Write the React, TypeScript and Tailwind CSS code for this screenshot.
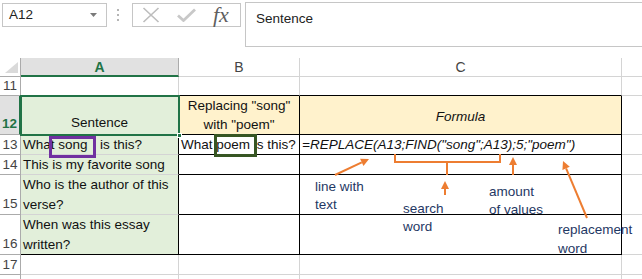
import React from 'react';

const ORANGE = '#ed7d31';

const FormulaBar: React.FC = () => (
  <div className="flex h-[47px] items-start">
    <div className="ml-[2px] mt-[3px] flex h-[24px] w-[105px] items-center justify-between border border-[#c6c6c6] pl-[6px] pr-[9px]">
      <span className="text-[13.5px] text-[#222]">A12</span>
      <svg width="7" height="4" viewBox="0 0 7 4">
        <path d="M0 0 H7 L3.5 4 Z" fill="#7a7a7a" />
      </svg>
    </div>
    <div className="ml-[10px] mt-[9px] flex flex-col gap-[3px]">
      <span className="h-[2px] w-[2px] bg-[#b5b5b5]" />
      <span className="h-[2px] w-[2px] bg-[#b5b5b5]" />
      <span className="h-[2px] w-[2px] bg-[#b5b5b5]" />
    </div>
    <div className="ml-[13px] mt-[3px] flex h-[24px] w-[109px] items-center border border-[#c6c6c6] pl-[9px]">
      <svg width="18" height="16" viewBox="0 0 18 16">
        <path d="M1.5 1 L16.5 15 M16.5 1 L1.5 15" stroke="#bdbdbd" strokeWidth="1.6" fill="none" />
      </svg>
      <svg className="ml-[17px]" width="19" height="14" viewBox="0 0 19 14">
        <path d="M1 7.5 L6.5 12.5 L18 1.5" stroke="#c8c8c8" strokeWidth="2.8" fill="none" />
      </svg>
      <span className="ml-[17px] font-['Liberation_Serif',serif] text-[22px] italic leading-none text-[#5f5f5f]">fx</span>
    </div>
    <div className="ml-[4px] mt-[2px] h-[45px] flex-1 border border-r-0 border-[#c6c6c6] pl-[10px] pt-[3px]">
      <span className="text-[13.5px] text-[#222]">Sentence</span>
    </div>
  </div>
);

const Sheet: React.FC = () => (
  <div className="mt-[11px] grid grid-cols-[21px_158px_121px_322px_20px] grid-rows-[19px_19px_39px_20px_20px_40px_40px_20px_20px] text-[13.5px] leading-[20px] text-[#111]">
    {/* header row */}
    <div className="relative border-r border-b border-[#ababab] bg-white">
      <svg className="absolute left-[5px] top-[4px]" width="13" height="11" viewBox="0 0 13 11">
        <path d="M13 0 V11 H0 Z" fill="#dadada" />
      </svg>
    </div>
    <div className="flex items-center justify-center border-r border-[#ababab] border-b-2 border-b-[#217346] bg-[#e1e1e1] text-[14px] font-bold text-[#217346]">A</div>
    <div className="flex items-center justify-center border-r border-b border-[#d4d4d4] bg-white text-[14px] text-[#444]">B</div>
    <div className="flex items-center justify-center border-r border-b border-[#d4d4d4] bg-white text-[14px] text-[#444]">C</div>
    <div className="border-b border-[#d4d4d4] bg-white" />

    {/* row 11 */}
    <div className="flex items-center justify-center border-r border-b border-[#ababab] text-[#444]">11</div>
    <div className="border-r border-b border-[#d4d4d4]" />
    <div className="border-r border-b border-[#d4d4d4] border-b-black" />
    <div className="border-r border-b border-[#d4d4d4] border-b-black" />
    <div className="border-b border-[#d4d4d4]" />

    {/* row 12 */}
    <div className="flex items-end justify-center border-r-2 border-b border-r-[#217346] border-b-[#ababab] bg-[#e1e1e1] font-bold text-[#217346]">12</div>
    <div className="flex items-end justify-center border-r border-b border-black bg-[#e2efda] pb-[1px]">Sentence</div>
    <div className="flex items-end justify-center border-r border-b border-black bg-[#fff2cc] text-center leading-[19px]">
      Replacing "song"
      <br />
      with "poem"
    </div>
    <div className="flex items-center justify-center border-r border-b border-black bg-[#fff2cc] pt-[3px] italic">Formula</div>
    <div className="border-b border-[#d4d4d4]" />

    {/* row 13 */}
    <div className="flex items-center justify-center border-r border-b border-[#ababab] text-[#444]">13</div>
    <div className="flex border-r border-b border-black border-b-[#d4d4d4] bg-[#e2efda] pl-[2px] whitespace-nowrap">
      <span className="w-[77px]">What song</span>
      <span>is this?</span>
    </div>
    <div className="border-r border-b border-black pl-[2px] whitespace-nowrap">What poem is this?</div>
    <div className="border-r border-b border-black pl-[2px] italic whitespace-nowrap">=REPLACE(A13;FIND("song";A13);5;"poem")</div>
    <div className="border-b border-[#d4d4d4]" />

    {/* row 14 */}
    <div className="flex items-center justify-center border-r border-b border-[#ababab] text-[#444]">14</div>
    <div className="border-r border-b border-black border-b-[#d4d4d4] bg-[#e2efda] pl-[2px]">This is my favorite song</div>
    <div className="border-r border-b border-black" />
    <div className="border-r border-b border-black" />
    <div className="border-b border-[#d4d4d4]" />

    {/* row 15 */}
    <div className="flex items-end justify-center border-r border-b border-[#ababab] text-[#444]">15</div>
    <div className="border-r border-b border-black border-b-[#d4d4d4] bg-[#e2efda] pl-[2px]">
      Who is the author of this
      <br />
      verse?
    </div>
    <div className="border-r border-b border-black" />
    <div className="border-r border-b border-black" />
    <div className="border-b border-[#d4d4d4]" />

    {/* row 16 */}
    <div className="flex items-end justify-center border-r border-b border-[#ababab] text-[#444]">16</div>
    <div className="border-r border-b border-black bg-[#e2efda] pl-[2px]">
      When was this essay
      <br />
      written?
    </div>
    <div className="border-r border-b border-black" />
    <div className="border-r border-b border-black" />
    <div className="border-b border-[#d4d4d4]" />

    {/* row 17 */}
    <div className="flex items-center justify-center border-r border-b border-[#ababab] text-[#444]">17</div>
    <div className="border-r border-b border-[#d4d4d4]" />
    <div className="border-r border-b border-[#d4d4d4]" />
    <div className="border-r border-b border-[#d4d4d4]" />
    <div className="border-b border-[#d4d4d4]" />

    {/* row 18 */}
    <div className="border-r border-[#ababab]" />
    <div className="border-r border-[#d4d4d4]" />
    <div className="border-r border-[#d4d4d4]" />
    <div className="border-r border-[#d4d4d4]" />
    <div />
  </div>
);

const Arrow: React.FC<{ x1: number; y1: number; x2: number; y2: number }> = ({ x1, y1, x2, y2 }) => {
  const a = Math.atan2(y2 - y1, x2 - x1);
  const len = 8;
  const w = 4;
  const bx = x2 - Math.cos(a) * len;
  const by = y2 - Math.sin(a) * len;
  const px = -Math.sin(a) * w;
  const py = Math.cos(a) * w;
  return (
    <g>
      <line x1={x1} y1={y1} x2={bx} y2={by} stroke={ORANGE} strokeWidth="2" />
      <path d={`M${x2} ${y2} L${bx + px} ${by + py} L${bx - px} ${by - py} Z`} fill={ORANGE} />
    </g>
  );
};

const Notes: React.FC = () => (
  <>
    <svg className="pointer-events-none absolute left-0 top-0" width="642" height="279" viewBox="0 0 642 279">
      <Arrow x1={335} y1={175} x2={369} y2={159} />
      <path d="M395 154 V162 H500 V154 M447 162 V175" stroke={ORANGE} strokeWidth="2" fill="none" />
      <Arrow x1={445} y1={195} x2={445} y2={181} />
      <Arrow x1={513} y1={175} x2={513} y2={157} />
      <Arrow x1={587} y1={218} x2={563} y2={161} />
    </svg>

    {/* selection of A12 */}
    <div className="pointer-events-none absolute left-[20px] top-[95px] h-[41px] w-[160px] border-2 border-[#217346]" />
    <div className="pointer-events-none absolute left-[177px] top-[133px] h-[5px] w-[5px] border border-white bg-[#217346]" />

    {/* highlighted words */}
    <div className="pointer-events-none absolute left-[49px] top-[136px] h-[22px] w-[47px] border-[3px] border-[#7030a0]" />
    <div className="pointer-events-none absolute left-[214px] top-[134px] h-[23px] w-[43px] border-[3px] border-[#375623]" />

    {/* captions */}
    <div className="absolute left-[315px] top-[178px] text-[13.5px] leading-[18px] text-[#1f3864]">
      line with
      <br />
      text
    </div>
    <div className="absolute left-[403px] top-[200px] text-[13.5px] leading-[18px] text-[#1f3864]">
      search
      <br />
      word
    </div>
    <div className="absolute left-[489px] top-[183px] text-[13.5px] leading-[18px] text-[#1f3864]">
      amount
      <br />
      of values
    </div>
    <div className="absolute left-[558px] top-[220px] text-[13.5px] leading-[19px] text-[#1f3864]">
      replacement
      <br />
      word
    </div>
  </>
);

export default function App() {
  return (
    <div className="relative h-[279px] w-[642px] overflow-hidden bg-white font-['Liberation_Sans',Arial,sans-serif]">
      <FormulaBar />
      <Sheet />
      <Notes />
    </div>
  );
}
